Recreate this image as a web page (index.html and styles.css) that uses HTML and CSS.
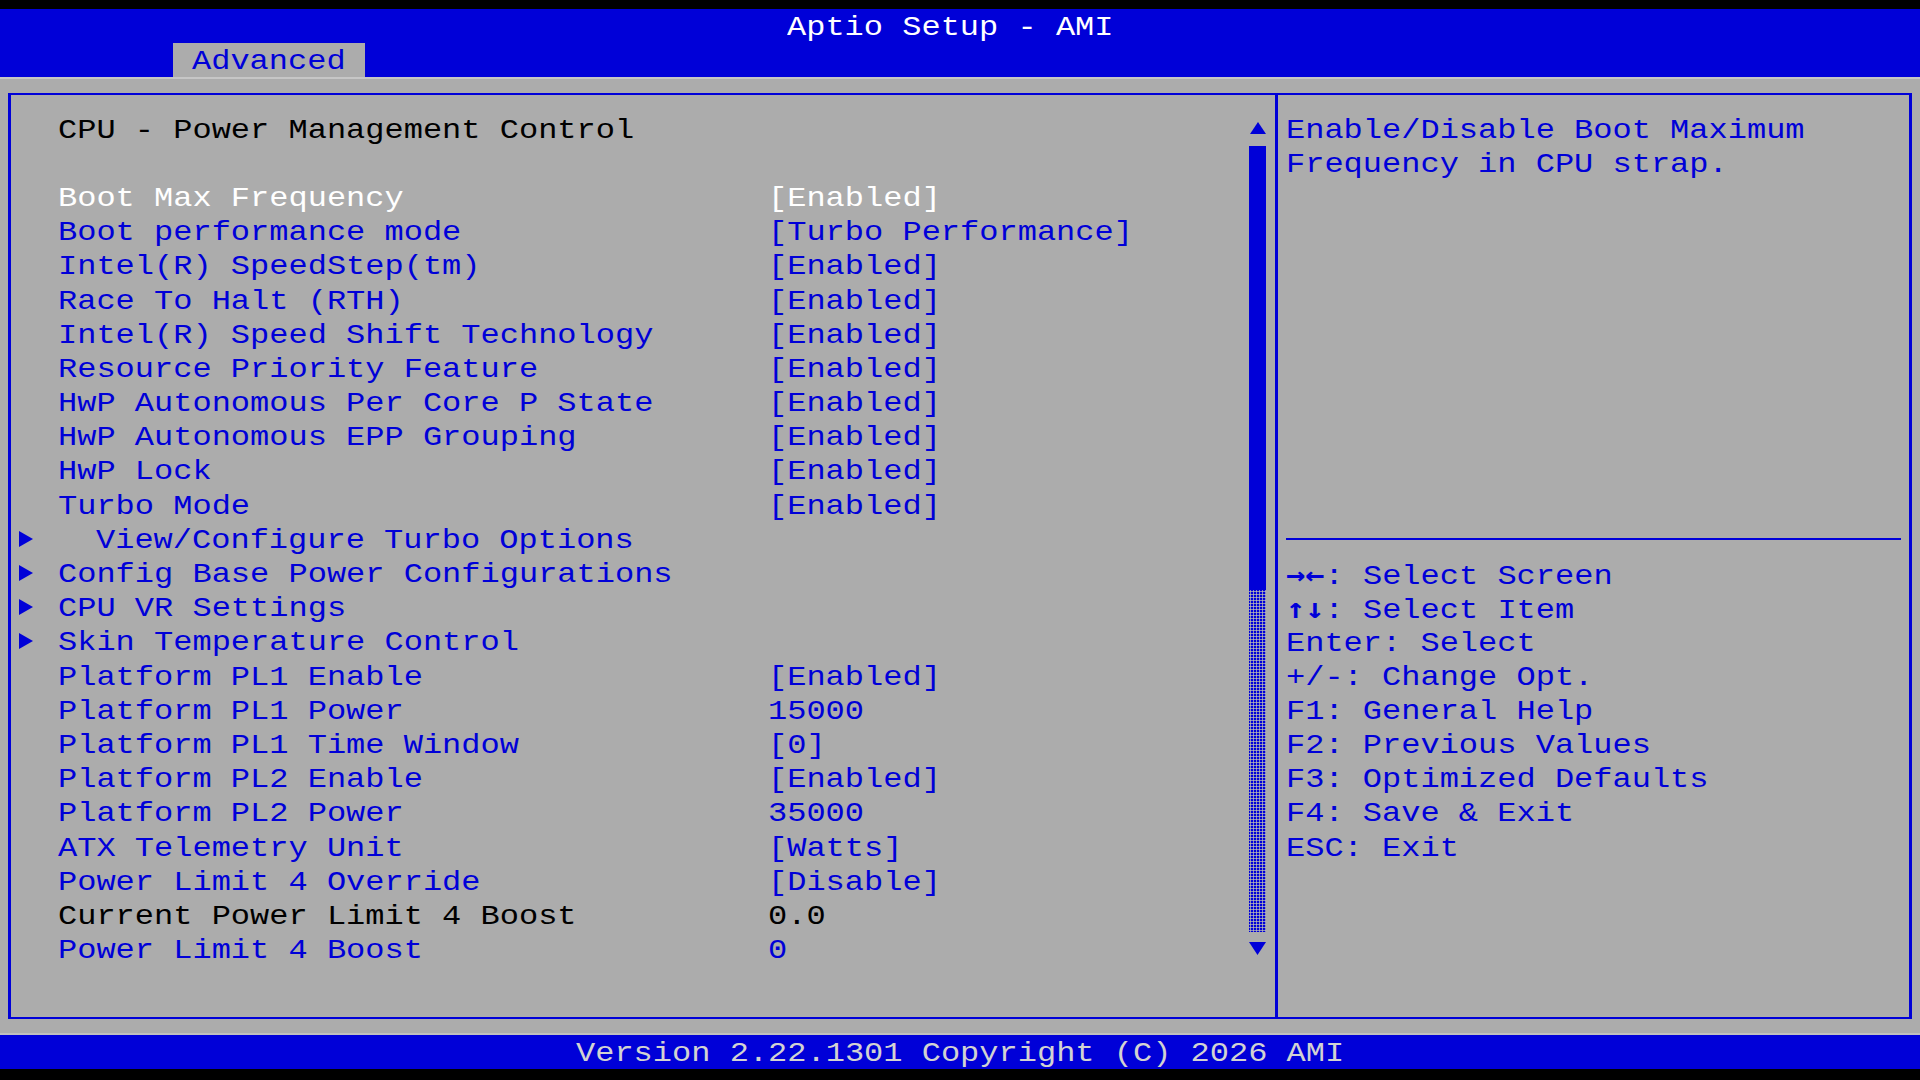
FILE: index.html
```html
<!DOCTYPE html>
<html lang="en">
<head>
    <meta charset="UTF-8">
    <meta name="viewport" content="width=device-width, initial-scale=1.0">
    <title>Aptio Setup - AMI</title>
    <link rel="stylesheet" href="styles.css">
</head>
<body>
<div class="screen">
    <header class="titlebar row"><span class="t">Aptio Setup - AMI</span></header>
    <nav class="tabs row"><span class="tab"><span class="t">Advanced</span></span></nav>

    <main class="main">
        <div class="frame">
            <section class="setup">
                <div class="list">
                    <div class="row heading"><span class="arrow"></span><span class="label t">CPU - Power Management Control</span></div>
                    <div class="row"></div>
                    <div class="row item selected"><span class="arrow"></span><span class="label t">Boot Max Frequency</span><span class="value t">[Enabled]</span></div>
                    <div class="row item"><span class="arrow"></span><span class="label t">Boot performance mode</span><span class="value t">[Turbo Performance]</span></div>
                    <div class="row item"><span class="arrow"></span><span class="label t">Intel(R) SpeedStep(tm)</span><span class="value t">[Enabled]</span></div>
                    <div class="row item"><span class="arrow"></span><span class="label t">Race To Halt (RTH)</span><span class="value t">[Enabled]</span></div>
                    <div class="row item"><span class="arrow"></span><span class="label t">Intel(R) Speed Shift Technology</span><span class="value t">[Enabled]</span></div>
                    <div class="row item"><span class="arrow"></span><span class="label t">Resource Priority Feature</span><span class="value t">[Enabled]</span></div>
                    <div class="row item"><span class="arrow"></span><span class="label t">HwP Autonomous Per Core P State</span><span class="value t">[Enabled]</span></div>
                    <div class="row item"><span class="arrow"></span><span class="label t">HwP Autonomous EPP Grouping</span><span class="value t">[Enabled]</span></div>
                    <div class="row item"><span class="arrow"></span><span class="label t">HwP Lock</span><span class="value t">[Enabled]</span></div>
                    <div class="row item"><span class="arrow"></span><span class="label t">Turbo Mode</span><span class="value t">[Enabled]</span></div>
                    <div class="row item"><span class="arrow"><svg width="16" height="16" viewBox="0 0 16 16"><path d="M1 0 L15 8 L1 16 Z" fill="currentColor"/></svg></span><span class="label t indent">View/Configure Turbo Options</span></div>
                    <div class="row item"><span class="arrow"><svg width="16" height="16" viewBox="0 0 16 16"><path d="M1 0 L15 8 L1 16 Z" fill="currentColor"/></svg></span><span class="label t">Config Base Power Configurations</span></div>
                    <div class="row item"><span class="arrow"><svg width="16" height="16" viewBox="0 0 16 16"><path d="M1 0 L15 8 L1 16 Z" fill="currentColor"/></svg></span><span class="label t">CPU VR Settings</span></div>
                    <div class="row item"><span class="arrow"><svg width="16" height="16" viewBox="0 0 16 16"><path d="M1 0 L15 8 L1 16 Z" fill="currentColor"/></svg></span><span class="label t">Skin Temperature Control</span></div>
                    <div class="row item"><span class="arrow"></span><span class="label t">Platform PL1 Enable</span><span class="value t">[Enabled]</span></div>
                    <div class="row item"><span class="arrow"></span><span class="label t">Platform PL1 Power</span><span class="value t">15000</span></div>
                    <div class="row item"><span class="arrow"></span><span class="label t">Platform PL1 Time Window</span><span class="value t">[0]</span></div>
                    <div class="row item"><span class="arrow"></span><span class="label t">Platform PL2 Enable</span><span class="value t">[Enabled]</span></div>
                    <div class="row item"><span class="arrow"></span><span class="label t">Platform PL2 Power</span><span class="value t">35000</span></div>
                    <div class="row item"><span class="arrow"></span><span class="label t">ATX Telemetry Unit</span><span class="value t">[Watts]</span></div>
                    <div class="row item"><span class="arrow"></span><span class="label t">Power Limit 4 Override</span><span class="value t">[Disable]</span></div>
                    <div class="row item readonly"><span class="arrow"></span><span class="label t">Current Power Limit 4 Boost</span><span class="value t">0.0</span></div>
                    <div class="row item"><span class="arrow"></span><span class="label t">Power Limit 4 Boost</span><span class="value t">0</span></div>
                </div>

                <div class="scrollbar">
                    <div class="scroll-btn up"><svg width="16" height="12" viewBox="0 0 16 12"><path d="M8 0 L16 12 L0 12 Z" fill="currentColor"/></svg></div>
                    <div class="thumb"></div>
                    <div class="track"></div>
                    <div class="scroll-btn down"><svg width="17" height="13" viewBox="0 0 17 13"><path d="M0 0 L17 0 L8.5 13 Z" fill="currentColor"/></svg></div>
                </div>
            </section>

            <aside class="help">
                <div class="row"><span class="t">Enable/Disable Boot Maximum</span></div>
                <div class="row"><span class="t">Frequency in CPU strap.</span></div>
                <div class="help-gap"></div>
                <div class="row separator"></div>
                <div class="row"><span class="t"><span class="key">→←</span>: Select Screen</span></div>
                <div class="row"><span class="t"><span class="key">↑↓</span>: Select Item</span></div>
                <div class="row"><span class="t">Enter: Select</span></div>
                <div class="row"><span class="t">+/-: Change Opt.</span></div>
                <div class="row"><span class="t">F1: General Help</span></div>
                <div class="row"><span class="t">F2: Previous Values</span></div>
                <div class="row"><span class="t">F3: Optimized Defaults</span></div>
                <div class="row"><span class="t">F4: Save &amp; Exit</span></div>
                <div class="row"><span class="t">ESC: Exit</span></div>
            </aside>
        </div>
    </main>

    <footer class="footer row"><span class="t">Version 2.22.1301 Copyright (C) 2026 AMI</span></footer>
</div>
</body>
</html>
```

FILE: styles.css
```css
:root {
    --blue: #0000d8;
    --gray: #acacac;
    --cw: 19.2px;
    --rh: 34.2px;
}
body {
    margin: 0;
    background: #000;
    font-family: "Liberation Mono", "DejaVu Sans Mono", monospace;
    font-size: 28px;
    color: var(--blue);
}
.screen {
    width: 1920px;
    height: 1080px;
    padding-top: 9px;
    box-sizing: border-box;
    overflow: hidden;
}
.row {
    display: flex;
    height: var(--rh);
    line-height: 38.6px;
    white-space: pre;
}
/* glyphs of the setup font are wide: 16.8px advance stretched to the 19.2px cell */
.t {
    display: inline-block;
    transform: scaleX(1.143);
    transform-origin: 0 0;
}
.titlebar {
    background: var(--blue);
    color: #fff;
    padding-left: calc(var(--cw) * 41);
}
.tabs {
    background: var(--blue);
    padding-left: calc(var(--cw) * 9);
}
.tab {
    width: calc(var(--cw) * 10);
    padding-left: var(--cw);
    box-sizing: border-box;
    background: var(--gray);
    color: var(--blue);
}
.main {
    height: calc(var(--rh) * 28);
    background: var(--gray);
    padding: 15.6px 8px 0 8px;
    box-sizing: border-box;
    box-shadow: inset 0 2px 0 #c6c6c6, inset 0 -2px 0 #c0c0c0;
}
.frame {
    display: flex;
    height: 926px;
    border-style: solid;
    border-color: var(--blue);
    border-width: 2px 3px;
    box-sizing: border-box;
}
.setup {
    display: flex;
    width: 1264px;
    padding-top: 16.6px;
    border-right: 3px solid var(--blue);
}
.list {
    width: 1237px;
}
.arrow {
    width: 46.6px;
    padding: 9px 0 0 7px;
    box-sizing: border-box;
    flex: none;
}
.arrow svg {
    display: block;
}
.label {
    width: calc(var(--cw) * 37);
    flex: none;
}
.label.indent {
    margin-left: calc(var(--cw) * 2);
    width: calc(var(--cw) * 35);
}
.heading,
.readonly {
    color: #000;
}
.selected {
    color: #fff;
}
.scrollbar {
    width: var(--cw);
    display: flex;
    flex-direction: column;
    align-items: center;
}
.scroll-btn {
    height: var(--rh);
    width: 100%;
    display: flex;
    justify-content: center;
    padding-top: 10px;
    box-sizing: border-box;
}
.scroll-btn svg {
    display: block;
}
.thumb {
    width: 17px;
    height: calc(var(--rh) * 13);
    background: var(--blue);
}
.track {
    width: 17px;
    height: calc(var(--rh) * 10);
    background: radial-gradient(circle, #b4b4b4 0 0.9px, transparent 1.3px) 0 0 / 3px 3px, var(--blue);
}
.help {
    flex: 1;
    padding: 16.6px 8.2px 0 8.4px;
}
.help-gap {
    height: calc(var(--rh) * 10);
}
.separator {
    align-items: center;
}
.separator::before {
    content: "";
    width: calc(var(--cw) * 32);
    height: 2px;
    background: var(--blue);
}
.key {
    font-family: "DejaVu Sans Mono", monospace;
    font-weight: bold;
}
.footer {
    background: var(--blue);
    color: #d2d2d2;
    padding-left: calc(var(--cw) * 30);
}
```
